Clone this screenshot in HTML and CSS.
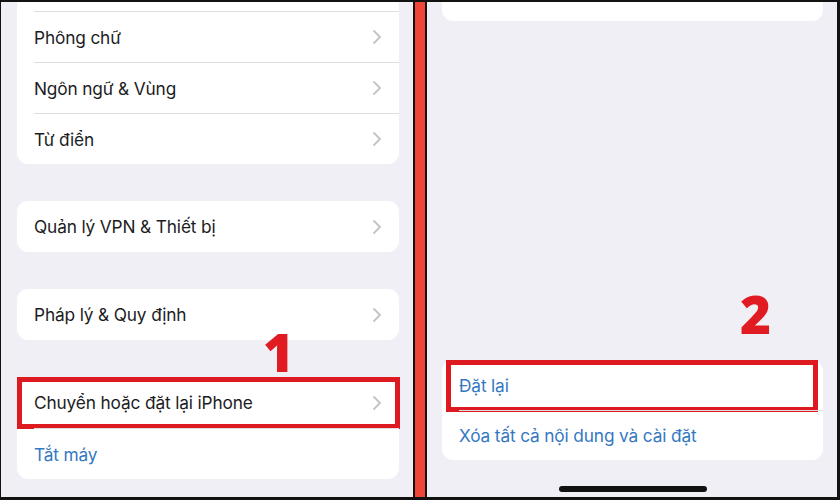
FILE: index.html
```html
<!DOCTYPE html>
<html lang="vi">
<head>
  <meta charset="UTF-8" />
  <title>Cài đặt chung</title>
  <link rel="stylesheet" href="styles.css">
</head>
<body>

<div id="frame">
  <div class="screen" id="left">
    <div class="group first">
      <div class="row"><div class="row-body"></div></div>
      <div class="row"><div class="row-body"><span>Phông chữ</span><svg class="chev" viewBox="0 0 8 14"><polyline points="1,1 7,7 1,13"/></svg></div></div>
      <div class="row"><div class="row-body"><span>Ngôn ngữ &amp; Vùng</span><svg class="chev" viewBox="0 0 8 14"><polyline points="1,1 7,7 1,13"/></svg></div></div>
      <div class="row"><div class="row-body"><span>Từ điển</span><svg class="chev" viewBox="0 0 8 14"><polyline points="1,1 7,7 1,13"/></svg></div></div>
    </div>

    <div class="group">
      <div class="row"><div class="row-body"><span>Quản lý VPN &amp; Thiết bị</span><svg class="chev" viewBox="0 0 8 14"><polyline points="1,1 7,7 1,13"/></svg></div></div>
    </div>

    <div class="group">
      <div class="row"><div class="row-body"><span>Pháp lý &amp; Quy định</span><svg class="chev" viewBox="0 0 8 14"><polyline points="1,1 7,7 1,13"/></svg></div></div>
    </div>

    <div class="group">
      <div class="row marked mark-left">
        <div class="row-body"><span>Chuyển hoặc đặt lại iPhone</span><svg class="chev" viewBox="0 0 8 14"><polyline points="1,1 7,7 1,13"/></svg></div>
        <div class="step step-1">1</div>
      </div>
      <div class="row"><div class="row-body link"><span>Tắt máy</span></div></div>
    </div>
  </div>

  <div class="divider"></div>

  <div class="screen" id="right">
    <div class="group top-stub"></div>

    <div class="group reset">
      <div class="row short marked mark-right">
        <div class="row-body link"><span>Đặt lại</span></div>
        <div class="step step-2">2</div>
      </div>
      <div class="row short"><div class="row-body link"><span>Xóa tất cả nội dung và cài đặt</span></div></div>
    </div>

    <div class="home-bar"></div>
  </div>
</div>

</body>
</html>
```

FILE: styles.css
```css
body {
  margin: 0;
  background: #121212;
  font-family: Inter, "Noto Sans", sans-serif;
  color: #1c1c1e;
}

#frame {
  display: flex;
  width: 840px;
  height: 500px;
  box-sizing: border-box;
  padding: 2px 3px 3px 1px;
}

.screen {
  background: #f0eff5;
  overflow: hidden;
  display: flex;
  flex-direction: column;
}

#left {
  width: 412px;
  padding: 0 14px 0 16px;
  box-sizing: border-box;
}

#right {
  width: 410px;
  padding: 0 14px 0 15px;
  box-sizing: border-box;
}

.divider {
  width: 10px;
  background: #ef4637;
  border-left: 2px solid #121212;
  border-right: 2px solid #121212;
}

.group {
  background: #fff;
  border-radius: 11px;
  margin-top: 37px;
}

.group.first {
  margin-top: -42px;
}

.row {
  padding-left: 17px;
  position: relative;
}

.row-body {
  height: 51px;
  box-sizing: border-box;
  display: flex;
  align-items: center;
  justify-content: space-between;
  padding-right: 18px;
  border-top: 1px solid #dedee2;
  font-size: 17.3px;
  letter-spacing: -0.15px;
}

.row:first-child .row-body {
  border-top: none;
}

.row.short .row-body {
  height: 50px;
}

.link {
  color: #3478c2;
}

.chev {
  width: 8px;
  height: 14px;
  fill: none;
  stroke: #c4c4c8;
  stroke-width: 1.8;
  stroke-linecap: round;
  stroke-linejoin: round;
}

/* red annotation boxes */
.marked::after {
  content: "";
  position: absolute;
  border: 5px solid #dc1a1f;
}

.mark-left::after {
  inset: 0 -1px -1px 0;
}

.mark-right::after {
  inset: 0 5px -2px 4px;
}

.step {
  position: absolute;
  font-family: "Open Sans", "DejaVu Sans", sans-serif;
  font-weight: 800;
  font-size: 53px;
  line-height: 1;
  color: #e11b22;
}

.step-1 {
  left: 246px;
  top: -52px;
}

.step-2 {
  left: 298px;
  top: -73px;
}

.top-stub {
  margin-top: 0;
  height: 19px;
  border-radius: 0 0 11px 11px;
}

.reset {
  margin-top: 339px;
}

.home-bar {
  width: 148px;
  height: 6px;
  border-radius: 3px;
  background: #111;
  margin: 26px auto 0;
}
```
